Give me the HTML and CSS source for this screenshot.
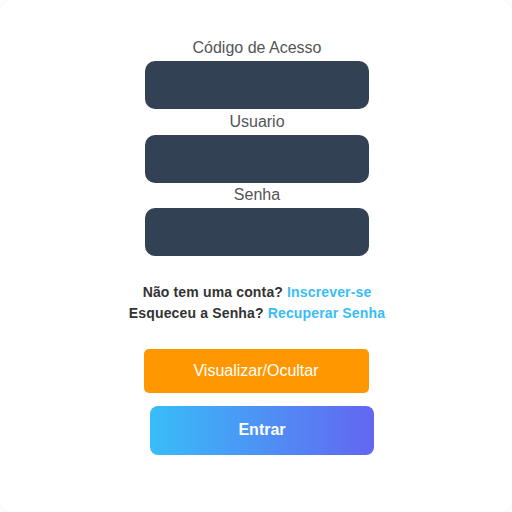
FILE: index.html
```html
<!DOCTYPE html>
<html lang="pt-BR">

<head>
    <meta charset="UTF-8">
    <meta name="viewport" content="width=device-width, initial-scale=1.0">
    <title>Login</title>
    <link rel="stylesheet" href="styles.css">
</head>

<body>

    <div class="card">
        <form class="login-form">
            <div class="field">
                <label for="codigo">Código de Acesso</label>
                <input type="text" id="codigo" class="input">
            </div>
            <div class="field">
                <label for="usuario">Usuario</label>
                <input type="text" id="usuario" class="input">
            </div>
            <div class="field">
                <label for="senha">Senha</label>
                <input type="password" id="senha" class="input">
            </div>

            <div class="links">
                <p>Não tem uma conta? <a href="#">Inscrever-se</a></p>
                <p>Esqueceu a Senha? <a href="#">Recuperar Senha</a></p>
            </div>

            <button type="button" class="toggle-btn">Visualizar/Ocultar</button>
            <button type="submit" class="login-btn">Entrar</button>
        </form>
    </div>

</body>

</html>
```

FILE: styles.css
```css
body {
    margin: 0;
    padding: 0;
    font-family: 'Liberation Sans', Arial, sans-serif;
    background: #ffffff;
}

.card {
    box-sizing: border-box;
    height: 100vh;
    border-radius: 12px;
    background: #ffffff;
    box-shadow: 0 0 3px rgba(0, 0, 0, 0.08);
    padding-top: 38px;
}

.login-form {
    width: 226px;
    margin: 0 auto;
    display: flex;
    flex-direction: column;
    align-items: center;
    padding-left: 2px;
}

.field {
    display: flex;
    flex-direction: column;
    align-items: center;
    margin-bottom: 2.5px;
}

.field label {
    font-size: 16px;
    line-height: 20px;
    color: #555555;
    margin-bottom: 3px;
}

.input {
    box-sizing: border-box;
    width: 224px;
    height: 48px;
    border: none;
    border-radius: 10px;
    background-color: #334155;
    outline: none;
}

.links {
    margin-top: 23px;
    text-align: center;
    white-space: nowrap;
}

.links p {
    margin: 0;
    font-size: 14px;
    line-height: 21px;
    font-weight: bold;
    letter-spacing: 0.15px;
    color: #333333;
}

.links a {
    color: #38bdf8;
    text-decoration: none;
}

.toggle-btn {
    margin-top: 25px;
    width: 225px;
    height: 44px;
    border: none;
    border-radius: 5px;
    background-color: #ff9800;
    color: #ffffff;
    font-family: inherit;
    font-size: 16px;
    margin-right: 2px;
}

.login-btn {
    margin-top: 13px;
    margin-left: 10px;
    width: 224px;
    height: 49px;
    border: none;
    border-radius: 8px;
    background: linear-gradient(to right, #38bdf8, #6366f1);
    color: #ffffff;
    font-family: inherit;
    font-size: 16px;
    font-weight: bold;
}
```
